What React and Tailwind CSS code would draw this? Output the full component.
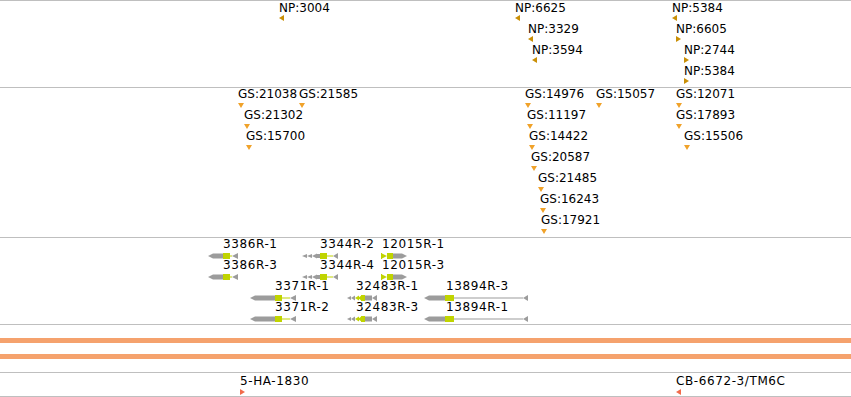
import React from "react";

const G = "#9c9c9c";
const Y = "#c0d400";

const NP = [
  { x: 279, r: 0, d: "L", t: "NP:3004" },
  { x: 515, r: 0, d: "L", t: "NP:6625" },
  { x: 528, r: 1, d: "L", t: "NP:3329" },
  { x: 532, r: 2, d: "L", t: "NP:3594" },
  { x: 672, r: 0, d: "L", t: "NP:5384" },
  { x: 676, r: 1, d: "R", t: "NP:6605" },
  { x: 684, r: 2, d: "R", t: "NP:2744" },
  { x: 684, r: 3, d: "R", t: "NP:5384" },
];

const GS = [
  { x: 238, r: 0, t: "GS:21038" },
  { x: 299, r: 0, t: "GS:21585" },
  { x: 244, r: 1, t: "GS:21302" },
  { x: 246, r: 2, t: "GS:15700" },
  { x: 525, r: 0, t: "GS:14976" },
  { x: 596, r: 0, t: "GS:15057" },
  { x: 527, r: 1, t: "GS:11197" },
  { x: 529, r: 2, t: "GS:14422" },
  { x: 531, r: 3, t: "GS:20587" },
  { x: 538, r: 4, t: "GS:21485" },
  { x: 540, r: 5, t: "GS:16243" },
  { x: 541, r: 6, t: "GS:17921" },
  { x: 676, r: 0, t: "GS:12071" },
  { x: 676, r: 1, t: "GS:17893" },
  { x: 684, r: 2, t: "GS:15506" },
];

function Glyph3386() {
  return (
    <svg width="31" height="6" viewBox="0 0 31 6">
      <polygon points="0,3 5,0.5 15,0.5 15,5.5 5,5.5" fill={G} />
      <rect x="15" y="0" width="7" height="6" fill={Y} />
      <rect x="22" y="2.5" width="2" height="1" fill={Y} />
      <polygon points="24,3 30,0 30,6" fill={G} />
    </svg>
  );
}
function Glyph3344() {
  return (
    <svg width="37" height="6" viewBox="0 0 37 6">
      <polygon points="0,3 5,1 5,5" fill={G} />
      <polygon points="5,3 10,1 10,5" fill={G} />
      <polygon points="10,3 15,0.5 15,5.5" fill={G} />
      <rect x="14" y="1" width="4" height="4" fill={G} />
      <rect x="18" y="0" width="7" height="6" fill={Y} />
      <rect x="25" y="2.5" width="6" height="1" fill={Y} />
      <polygon points="31,3 36,0 36,6" fill={G} />
    </svg>
  );
}
function Glyph12015() {
  return (
    <svg width="27" height="6" viewBox="0 0 27 6">
      <rect x="0" y="0" width="1" height="6" fill={Y} />
      <polygon points="1,0.5 6,3 1,5.5" fill={Y} />
      <rect x="6" y="0" width="6" height="6" fill={Y} />
      <polygon points="12,0.5 21,0.5 26,3 21,5.5 12,5.5" fill={G} />
    </svg>
  );
}
function Glyph3371() {
  return (
    <svg width="47" height="6" viewBox="0 0 47 6">
      <polygon points="0,3 5,0.5 25,0.5 25,5.5 5,5.5" fill={G} />
      <rect x="25" y="0" width="7" height="6" fill={Y} />
      <rect x="32" y="2.5" width="8" height="1" fill={Y} />
      <polygon points="40,3 46,0 46,6" fill={G} />
    </svg>
  );
}
function Glyph32483() {
  return (
    <svg width="31" height="6" viewBox="0 0 31 6">
      <polygon points="0,3 4,1 4,5" fill={G} />
      <polygon points="4,3 8,0.5 8,5.5" fill={G} />
      <polygon points="8,3 12,0.5 12,5.5" fill={Y} />
      <polygon points="11,3 15,0 15,6" fill={Y} />
      <rect x="14" y="0" width="4" height="6" fill={Y} />
      <rect x="18" y="0.5" width="7" height="5" fill={G} />
      <polygon points="25,3 30,0 30,6" fill={G} />
    </svg>
  );
}
function Glyph13894() {
  return (
    <svg width="105" height="6" viewBox="0 0 105 6">
      <polygon points="0,3 5,0.5 21,0.5 21,5.5 5,5.5" fill={G} />
      <rect x="21" y="0" width="9" height="6" fill={Y} />
      <rect x="30" y="2.5" width="69" height="1" fill={G} />
      <polygon points="99,3 104,0 104,6" fill={G} />
    </svg>
  );
}

const GENES = [
  { lx: 223, gx: 208, r: 0, t: "3386R-1", C: Glyph3386 },
  { lx: 223, gx: 208, r: 1, t: "3386R-3", C: Glyph3386 },
  { lx: 320, gx: 302, r: 0, t: "3344R-2", C: Glyph3344 },
  { lx: 320, gx: 302, r: 1, t: "3344R-4", C: Glyph3344 },
  { lx: 382, gx: 381, r: 0, t: "12015R-1", C: Glyph12015 },
  { lx: 382, gx: 381, r: 1, t: "12015R-3", C: Glyph12015 },
  { lx: 275, gx: 250, r: 2, t: "3371R-1", C: Glyph3371 },
  { lx: 275, gx: 250, r: 3, t: "3371R-2", C: Glyph3371 },
  { lx: 356, gx: 347, r: 2, t: "32483R-1", C: Glyph32483 },
  { lx: 356, gx: 347, r: 3, t: "32483R-3", C: Glyph32483 },
  { lx: 446, gx: 424, r: 2, t: "13894R-3", C: Glyph13894 },
  { lx: 446, gx: 424, r: 3, t: "13894R-1", C: Glyph13894 },
];

function Tri({ d, color }) {
  const pts = d === "L" ? "5,0 5,6 0,3" : d === "R" ? "0,0 0,6 5,3" : "0,0 6,0 3,5";
  const w = d === "D" ? 6 : 5;
  const h = d === "D" ? 5 : 6;
  return (
    <svg width={w} height={h} viewBox={`0 0 ${w} ${h}`} className="block">
      <polygon points={pts} fill={color} />
    </svg>
  );
}

function Label({ children, wide }) {
  return (
    <span
      className={
        wide
          ? "block whitespace-nowrap text-[12px] leading-[13px] tracking-[0.6px] text-black"
          : "block whitespace-nowrap text-[12px] leading-[13px] text-black"
      }
    >
      {children}
    </span>
  );
}

export default function App() {
  return (
    <div className="w-[851px] h-[397px] bg-white overflow-hidden font-['DejaVu_Sans',sans-serif] flex flex-col border-t border-[#bfbfbf]">
      {/* NP track */}
      <div className="relative h-[87px] shrink-0 border-b border-[#bfbfbf]">
        {NP.map((f, i) => (
          <div key={i} className="absolute flex flex-col items-start" style={{ left: f.x, top: 1 + 21 * f.r }}>
            <Label>{f.t}</Label>
            <Tri d={f.d} color="#c98f06" />
          </div>
        ))}
      </div>
      {/* GS track */}
      <div className="relative h-[150px] shrink-0 border-b border-[#bfbfbf]">
        {GS.map((f, i) => (
          <div key={i} className="absolute flex flex-col items-start" style={{ left: f.x, top: 0 + 21 * f.r }}>
            <Label>{f.t}</Label>
            <div className="mt-[2px]">
              <Tri d="D" color="#f0a22a" />
            </div>
          </div>
        ))}
      </div>
      {/* gene track */}
      <div className="relative h-[87px] shrink-0 border-b border-[#bfbfbf]">
        {GENES.map((g, i) => (
          <React.Fragment key={i}>
            <div className="absolute" style={{ left: g.lx, top: 0 + 21 * g.r }}>
              <Label wide>{g.t}</Label>
            </div>
            <div className="absolute leading-none" style={{ left: g.gx, top: 15 + 21 * g.r }}>
              <g.C />
            </div>
          </React.Fragment>
        ))}
      </div>
      {/* orange track */}
      <div className="h-[48px] shrink-0 border-b border-[#bfbfbf] flex flex-col pt-[13px] gap-[11px]">
        <div className="h-[5px] bg-[#f5a26d]" />
        <div className="h-[5px] bg-[#f5a26d]" />
      </div>
      {/* bottom track */}
      <div className="relative h-[24px] shrink-0 border-b border-[#bfbfbf]">
        <div className="absolute flex flex-col items-start left-[240px] top-[2px]">
          <Label wide>5-HA-1830</Label>
          <div className="mt-[1px]">
            <Tri d="R" color="#f26b4b" />
          </div>
        </div>
        <div className="absolute flex flex-col items-start left-[676px] top-[2px]">
          <Label wide>CB-6672-3/TM6C</Label>
          <div className="mt-[1px]">
            <Tri d="L" color="#f26b4b" />
          </div>
        </div>
      </div>
    </div>
  );
}
